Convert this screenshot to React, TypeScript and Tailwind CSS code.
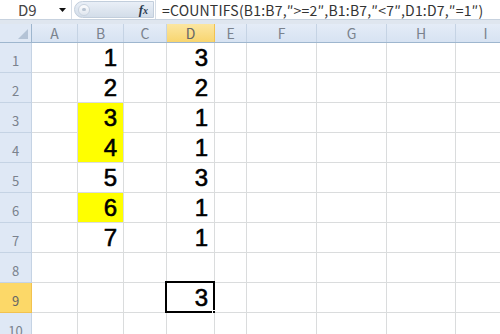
import React from 'react';

const COLS = ['A', 'B', 'C', 'D', 'E', 'F', 'G', 'H', 'I'];
const WIDTHS = ['w-[46px]', 'w-[46px]', 'w-[43px]', 'w-[48px]', 'w-[32px]', 'w-[70px]', 'w-[70px]', 'w-[69px]', 'w-[60px]'];

// cell values per row: [B, D]
const DATA: (number | null)[][] = [
  [1, 3],
  [2, 2],
  [3, 1],
  [4, 1],
  [5, 3],
  [6, 1],
  [7, 1],
  [null, null],
  [null, 3],
  [null, null],
];

const YELLOW_ROWS = [3, 4, 6];

const numFont = { fontFamily: '"Liberation Sans", Arial, sans-serif' };
const uiFont = { fontFamily: '"Noto Sans CJK JP", "Liberation Sans", sans-serif' };

function FormulaBar() {
  return (
    <div className="h-[24px] flex flex-col bg-[#dfe6ef]">
      <div className="h-[20px] flex items-stretch bg-white border-b border-[#c7d2df]">
        <div className="w-[72px] flex items-center border-r border-[#d6dde6]" style={uiFont}>
          <span className="flex-1 pl-[18px] text-[15px] text-[#444] leading-none">D9</span>
          <svg width="7" height="4" viewBox="0 0 7 4" className="mr-[5px]">
            <path d="M0 0 L7 0 L3.5 4 Z" fill="#111" />
          </svg>
        </div>
        <div className="w-[80px] my-[1px] ml-[2px] flex items-center rounded-l-full bg-gradient-to-b from-[#e9eff7] to-[#d3dde9] border border-[#c2cedc]">
          <div className="w-[12px] h-[12px] ml-[3px] rounded-full bg-gradient-to-b from-[#fdfdfe] to-[#dfe6ef] border border-[#c9d3df] flex items-center justify-center">
            <div className="w-[4px] h-[3px] rounded-full bg-[#b9c5d3]" />
          </div>
          <span className="ml-auto mr-[5px] text-[13px] italic font-bold text-[#2a3b4f] leading-none" style={{ fontFamily: '"Liberation Serif", serif' }}>
            f<span className="text-[10px]">x</span>
          </span>
        </div>
        <div className="flex-1 flex items-center pl-[6px] border-l border-[#d6dde6] ml-[1px]">
          <span className="text-[14px] text-[#333] leading-none tracking-[0.2px] whitespace-nowrap" style={uiFont}>
            =COUNTIFS(B1:B7,″&gt;=2″,B1:B7,″&lt;7″,D1:D7,″=1″)
          </span>
        </div>
      </div>
    </div>
  );
}

function HeaderRow() {
  return (
    <div className="flex h-[19px] border-b border-[#9eb6ce]">
      <div className="w-[32px] shrink-0 bg-[#dfe8f5] border-r border-[#9eb6ce] relative">
        <svg width="10" height="10" viewBox="0 0 10 10" className="absolute right-[3px] bottom-[3px]">
          <path d="M10 0 L10 10 L0 10 Z" fill="#b4c3d6" />
        </svg>
      </div>
      {COLS.map((c, i) => (
        <div
          key={c}
          className={`${WIDTHS[i]} shrink-0 flex items-center justify-center text-[14px] leading-none border-r ${
            c === 'D'
              ? 'bg-gradient-to-b from-[#fbe6a1] to-[#f8d56e] border-[#f2c24f] text-[#666]'
              : 'bg-gradient-to-b from-[#e4ecf7] to-[#d7e3f2] border-[#c5d3e4] text-[#7a828d]'
          }`}
          style={uiFont}
        >
          {c}
        </div>
      ))}
    </div>
  );
}

function Row({ n, vals }: { n: number; vals: (number | null)[] }) {
  const yellow = YELLOW_ROWS.includes(n);
  const nextYellow = YELLOW_ROWS.includes(n + 1);
  return (
    <div className="flex h-[30px]">
      <div
        className={`w-[32px] shrink-0 flex items-end justify-center pb-[5px] text-[13px] leading-none border-r border-b ${
          n === 9 ? 'bg-[#fcd868] border-[#f2c24f] text-[#666]' : 'bg-[#dfe8f5] border-[#c5d3e4] text-[#7a828d]'
        }`}
        style={uiFont}
      >
        {n}
      </div>
      {COLS.map((c, i) => {
        const isB = c === 'B';
        const isD = c === 'D';
        const val = isB ? vals[0] : isD ? vals[1] : null;
        const fill = isB && yellow;
        const bottom = isB && yellow && nextYellow ? 'border-b-[#ffff00]' : 'border-b-[#dadcdd]';
        return (
          <div
            key={c}
            className={`${WIDTHS[i]} shrink-0 relative flex items-end justify-end pr-[6px] pb-[2px] border-r border-b border-r-[#dadcdd] ${bottom} ${
              fill ? 'bg-[#ffff00]' : 'bg-white'
            }`}
          >
            {val !== null && (
              <span className="text-[24px] leading-none text-black [-webkit-text-stroke:0.6px_black]" style={numFont}>
                {val}
              </span>
            )}
            {isD && n === 9 && (
              <>
                <div className="absolute left-[-2px] top-[-2px] right-[-1px] bottom-[-1px] border-2 border-black pointer-events-none" />
                <div className="absolute right-[-4px] bottom-[-4px] w-[6px] h-[6px] bg-black border border-white" />
              </>
            )}
          </div>
        );
      })}
    </div>
  );
}

export default function App() {
  return (
    <div className="w-[500px] h-[334px] overflow-hidden bg-white">
      <FormulaBar />
      <HeaderRow />
      {DATA.map((v, i) => (
        <Row key={i} n={i + 1} vals={v} />
      ))}
    </div>
  );
}
